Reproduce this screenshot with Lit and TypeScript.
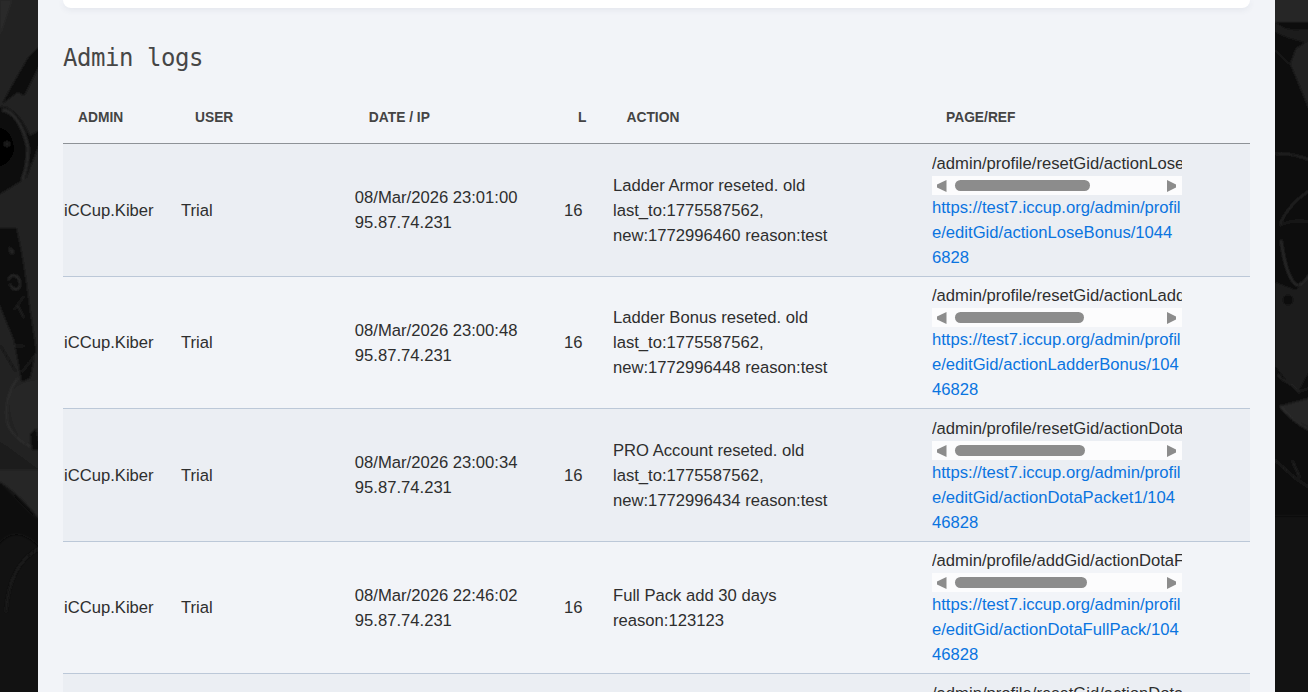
import { LitElement, html, css, svg } from "lit";
import { customElement } from "lit/decorators.js";

interface Row { date: string; action: string[]; page: string; ref: string[]; thumb: number; }

const rows: Row[] = [
  { date: "08/Mar/2026 23:01:00", action: ["Ladder Armor reseted. old", "last_to:1775587562,", "new:1772996460 reason:test"], page: "/admin/profile/resetGid/actionLoseBonus/10446828", ref: ["https://test7.iccup.org/admin/profil", "e/editGid/actionLoseBonus/1044", "6828"], thumb: 135 },
  { date: "08/Mar/2026 23:00:48", action: ["Ladder Bonus reseted. old", "last_to:1775587562,", "new:1772996448 reason:test"], page: "/admin/profile/resetGid/actionLadderBonus/10446828", ref: ["https://test7.iccup.org/admin/profil", "e/editGid/actionLadderBonus/104", "46828"], thumb: 129 },
  { date: "08/Mar/2026 23:00:34", action: ["PRO Account reseted. old", "last_to:1775587562,", "new:1772996434 reason:test"], page: "/admin/profile/resetGid/actionDotaPacket1/10446828", ref: ["https://test7.iccup.org/admin/profil", "e/editGid/actionDotaPacket1/104", "46828"], thumb: 130 },
  { date: "08/Mar/2026 22:46:02", action: ["Full Pack add 30 days", "reason:123123"], page: "/admin/profile/addGid/actionDotaFullPack/10446828", ref: ["https://test7.iccup.org/admin/profil", "e/editGid/actionDotaFullPack/104", "46828"], thumb: 132 },
  { date: "08/Mar/2026 22:45:50", action: ["PRO Account reseted. old", "last_to:1775587562,", "new:1772995550 reason:test"], page: "/admin/profile/resetGid/actionDotaPacket1/10446828", ref: ["https://test7.iccup.org/admin/profil", "e/editGid/actionDotaPacket1/104", "46828"], thumb: 130 },
];

const art = svg`
  <svg class="art" viewBox="0 0 1308 692" preserveAspectRatio="none" aria-hidden="true">
    <defs>
      <filter id="soft" x="-10%" y="-10%" width="120%" height="120%"><feGaussianBlur stdDeviation="0.9"/></filter>
    </defs>
    <rect width="1308" height="692" fill="#121212"/>
    <g filter="url(#soft)">
      <rect x="-4" y="-4" width="46" height="480" fill="#232323"/>
      <path d="M0 0H12L0 36Z" fill="#2c2c2c"/>
      <path d="M40 46L28 58L14 82L2 104L18 92L24 96L40 64Z" fill="#0e0e0e"/>
      <path d="M-4 108C10 102 22 118 30 136L40 130V142L26 178L-4 196Z" fill="#0a0a0a"/>
      <path d="M2 110C14 110 24 128 28 148C28 160 26 172 22 180" stroke="#2b2b2b" stroke-width="3" fill="none"/>
      <path d="M-4 128C8 126 14 140 14 150C12 160 4 168 -4 166Z" fill="#050505"/>
      <circle cx="7" cy="144" r="3" fill="#1b1b1b"/>
      <path d="M-4 228H16C22 250 26 280 30 310L36 350L30 378L22 382L14 340L-4 296Z" fill="#0b0b0b"/>
      <path d="M8 246L14 250V254L10 254Z" fill="#242424"/>
      <path d="M8 280C12 272 20 276 20 284C20 292 12 290 10 284" stroke="#323232" stroke-width="1.4" fill="none"/>
      <path d="M14 310L24 296M14 346H24M22 372L36 354M18 306L24 318" stroke="#2c2c2c" stroke-width="1.1" fill="none"/>
      <path d="M0 345L16 372" stroke="#0c0c0c" stroke-width="1.2" fill="none"/>
      <path d="M18 378C8 390 4 410 8 425C14 438 24 444 38 450" stroke="#333" stroke-width="1.3" fill="none"/>
      <path d="M10 394C16 384 26 382 38 380V432L26 444C14 434 8 412 10 394Z" fill="#282828"/>
      <path d="M30 434L36 428L40 450L32 450Z" fill="#0c0c0c"/>
      <path d="M-4 440C8 445 24 460 40 470V476H-4Z" fill="#1a1a1a"/>
      <path d="M-4 470H40V520C24 500 10 488 -4 480Z" fill="#262626"/>
      <path d="M-4 480C10 488 24 510 40 520V548C24 530 8 530 -4 548Z" fill="#0b0b0b"/>
      <path d="M6 612C8 580 20 558 40 548" stroke="#1c1c1c" stroke-width="2" fill="none"/>

      <rect x="1272" y="-4" width="40" height="520" fill="#0c0c0c"/>
      <rect x="1272" y="-4" width="40" height="26" fill="#272727"/>
      <path d="M1275 22C1290 34 1300 28 1310 30V44C1296 40 1286 38 1275 32Z" fill="#1c1c1c"/>
      <path d="M1290 64L1296 78L1310 112V40L1296 48Z" fill="#222"/>
      <path d="M1275 50L1289 64" stroke="#1e1e1e" stroke-width="1.2" fill="none"/>
      <path d="M1275 154C1288 152 1300 156 1310 160" stroke="#303030" stroke-width="1.2" fill="none"/>
      <path d="M1280 224C1286 210 1298 198 1310 190" stroke="#2e2e2e" stroke-width="1.4" fill="none"/>
      <path d="M1279 226C1290 220 1300 220 1310 222" stroke="#272727" stroke-width="1.2" fill="none"/>
      <path d="M1281 240C1284 262 1288 278 1296 285C1302 286 1306 280 1310 274" stroke="#383838" stroke-width="1.4" fill="none"/>
      <path d="M1275 282L1296 290L1310 276V370L1298 392L1286 380L1275 366Z" fill="#1b1b1b"/>
      <circle cx="1288" cy="300" r="5" fill="#080808"/>
      <path d="M1278 374C1282 384 1292 380 1298 392L1310 388" stroke="#2a2a2a" stroke-width="1.2" fill="none"/>
      <path d="M1280 406L1310 398V428C1298 422 1288 416 1280 406Z" fill="#262626"/>
      <path d="M1280 406C1288 416 1298 424 1310 430" stroke="#414141" stroke-width="1.2" fill="none"/>
      <path d="M1275 460L1295 478L1310 488M1292 460L1300 478" stroke="#272727" stroke-width="1.4" fill="none"/>
    </g>
  </svg>`;

@customElement("app-root")
export class AppRoot extends LitElement {
  static styles = css`
    :host { display: block; height: 692px; overflow: hidden; position: relative; background: #121212; font-family: "Liberation Sans", Arial, sans-serif; }
    .art { position: absolute; inset: 0; width: 100%; height: 100%; }
    .panel { position: relative; margin: 0 33px 0 38px; height: 692px; overflow: hidden; background: #f2f4f8; padding: 0 25px; box-sizing: border-box; }
    .card { height: 8px; background: #fff; border-radius: 0 0 8px 8px; box-shadow: 0 2px 6px rgba(60, 80, 120, 0.08); }
    h2 { margin: 35px 0 0; height: 30px; font: 400 24px/30px "DejaVu Sans Mono", monospace; letter-spacing: -0.45px; color: #464646; }
    .table { margin-top: 20px; font-size: 16.64px; line-height: 25px; color: #2e2e2e; }
    .row { display: grid; grid-template-columns: 118px 173.8px 209.2px 49px 319px 318px; }
    .head { height: 50px; align-items: center; border-bottom: 1px solid #8e9297; font-size: 13.8px; font-weight: 700; line-height: 16px; color: #444; box-sizing: content-box; }
    .head > div { padding-left: 15px; }
    .head > div:nth-child(n + 2) { margin-left: -1px; }
    .head > div:nth-child(5) { margin-left: -1.5px; }
    .body { height: 130.6875px; padding-top: 0.8125px; align-items: center; border-bottom: 1px solid #bcc8d8; box-sizing: content-box; }
    .body.odd { background: #ebeef3; }
    .admin { padding-left: 1px; }
    .page { width: 250px; align-self: start; padding-top: 5.9px; }
    .path { height: 25px; overflow: hidden; white-space: nowrap; line-height: 25px; }
    .bar { height: 19px; background: #fcfcfd; position: relative; }
    .bar svg { display: block; position: absolute; top: 4px; width: 10px; height: 12px; fill: #8c8c8c; }
    .bar .l { left: 5px; }
    .bar .r { right: 6px; }
    .thumb { position: absolute; left: 23px; top: 4px; height: 11px; border-radius: 6px; background: #8c8c8c; }
    a { display: block; color: #0a74e0; text-decoration: none; white-space: nowrap; line-height: 25px; overflow: hidden; }
  `;

  render() {
    return html`
      ${art}
      <div class="panel">
        <div class="card"></div>
        <h2>Admin logs</h2>
        <div class="table">
          <div class="row head">
            <div>ADMIN</div><div>USER</div><div>DATE / IP</div><div>L</div><div>ACTION</div><div>PAGE/REF</div>
          </div>
          ${rows.map((r, i) => html`
            <div class="row body ${i % 2 === 0 ? "odd" : ""}">
              <div class="admin">iCCup.Kiber</div>
              <div>Trial</div>
              <div>${r.date}<br />95.87.74.231</div>
              <div>16</div>
              <div>${r.action.map((l) => html`${l}<br />`)}</div>
              <div class="page">
                <div class="path">${r.page}</div>
                <div class="bar">
                  <svg class="l" viewBox="0 0 10 12"><path d="M9.5 0V12L0 7.5V4.5Z" /></svg>
                  <div class="thumb" style="width:${r.thumb}px"></div>
                  <svg class="r" viewBox="0 0 10 12"><path d="M1 0V12L10 7.5V4.5Z" /></svg>
                </div>
                ${r.ref.map((l) => html`<a href="#">${l}</a>`)}
              </div>
            </div>`)}
        </div>
      </div>
    `;
  }
}
